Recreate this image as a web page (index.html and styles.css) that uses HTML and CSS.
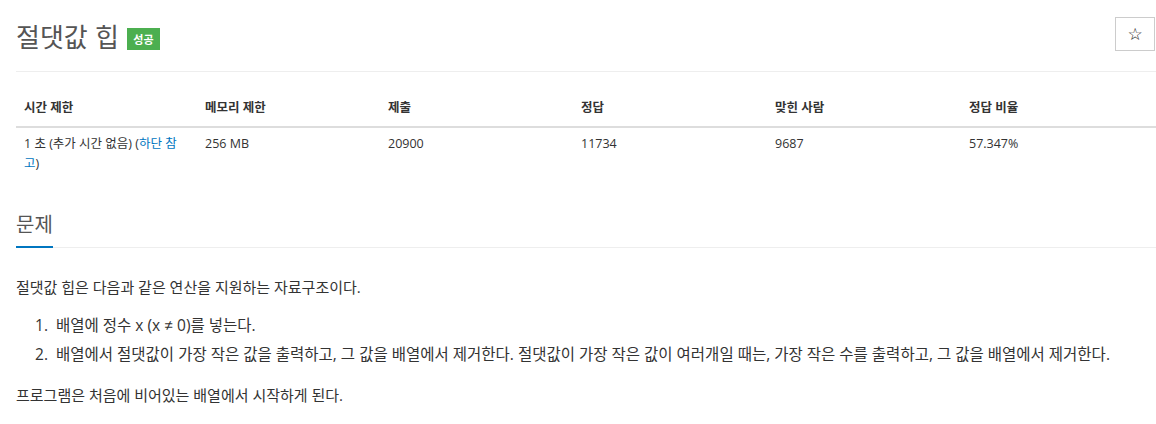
FILE: index.html
```html
<!DOCTYPE html>
<html lang="ko">
<head>
<meta charset="utf-8">
<title>절댓값 힙</title>
<link rel="stylesheet" href="styles.css">
</head>
<body>
<div class="page">
  <div class="page-header">
    <h1 class="title">절댓값 힙 <span class="label">성공</span></h1>
    <button class="star" type="button">☆</button>
  </div>

  <table class="info">
    <thead>
      <tr>
        <th class="c1">시간 제한</th>
        <th class="c2">메모리 제한</th>
        <th class="c3">제출</th>
        <th class="c4">정답</th>
        <th class="c5">맞힌 사람</th>
        <th class="c6">정답 비율</th>
      </tr>
    </thead>
    <tbody>
      <tr>
        <td>1 초 (추가 시간 없음) (<a href="#">하단 참고</a>)</td>
        <td>256 MB</td>
        <td>20900</td>
        <td>11734</td>
        <td>9687</td>
        <td>57.347%</td>
      </tr>
    </tbody>
  </table>

  <section class="problem">
    <div class="headline"><h2>문제</h2></div>
    <div class="text">
      <p>절댓값 힙은 다음과 같은 연산을 지원하는 자료구조이다.</p>
      <ol>
        <li>배열에 정수 x (x ≠ 0)를 넣는다.</li>
        <li>배열에서 절댓값이 가장 작은 값을 출력하고, 그 값을 배열에서 제거한다. 절댓값이 가장 작은 값이 여러개일 때는, 가장 작은 수를 출력하고, 그 값을 배열에서 제거한다.</li>
      </ol>
      <p>프로그램은 처음에 비어있는 배열에서 시작하게 된다.</p>
    </div>
  </section>
</div>
</body>
</html>
```

FILE: styles.css
```css
html, body {
  margin: 0;
  padding: 0;
  background: #fff;
}
body {
  font-family: "Open Sans", "Noto Sans CJK KR", "Noto Sans", sans-serif;
  font-size: 14px;
  line-height: 20px;
  color: #333;
}
.page {
  padding: 0 0 0 16px;
}
.page-header {
  display: flex;
  justify-content: space-between;
  align-items: flex-start;
  padding-top: 16px;
  padding-bottom: 15px;
  border-bottom: 1px solid #eee;
}
.title {
  margin: 0;
  font-family: "Noto Sans CJK KR", sans-serif;
  font-size: 26px;
  line-height: 40px;
  font-weight: 400;
  color: #555;
  display: flex;
  align-items: center;
}
.label {
  display: inline-block;
  margin-left: 8px;
  background: #4caf50;
  color: #fff;
  font-size: 11px;
  font-weight: 700;
  line-height: 22px;
  height: 22px;
  width: 33px;
  text-align: center;
  margin-top: 6px;
}
.star {
  width: 40px;
  height: 34px;
  margin-top: 1px;
  margin-right: 1px;
  border: 1px solid #ccc;
  background: #fff;
  font-family: "DejaVu Sans", sans-serif;
  font-size: 17px;
  line-height: 20px;
  color: #222;
  padding: 0;
}
.info {
  width: 1140px;
  border-collapse: collapse;
  margin-top: 18px;
  table-layout: fixed;
}
.info th, .info td {
  box-sizing: border-box;
  text-align: left;
  vertical-align: top;
  padding: 8px;
  font-size: 12.5px;
}
.info th {
  font-weight: 700;
  border-bottom: 2px solid #ddd;
}
.info td {
  padding-top: 6px;
  line-height: 20px;
}
.c1 { width: 181px; }
.c2 { width: 183px; }
.c3 { width: 193px; }
.c4 { width: 194px; }
.c5 { width: 194px; }
.c6 { width: 195px; }
.info a {
  color: #0076c0;
  text-decoration: none;
}
.problem {
  margin-top: 27px;
}
.headline {
  border-bottom: 1px solid #eee;
}
.headline h2 {
  display: inline-block;
  margin: 0 0 -1px;
  font-family: "Noto Sans CJK KR", sans-serif;
  font-size: 20px;
  font-weight: 400;
  line-height: 30px;
  color: #555;
  padding-bottom: 7px;
  border-bottom: 2px solid #0076c0;
}
.text {
  padding-top: 25px;
  font-size: 15px;
  line-height: 29px;
}
.text p {
  margin: 0 0 9px;
}
.text ol {
  margin: 0 0 12px;
  padding-left: 40px;
}
.text li {
  font-size: 15.5px;
}
.text li::marker {
  content: counter(list-item) ".\00a0\00a0";
}
```
